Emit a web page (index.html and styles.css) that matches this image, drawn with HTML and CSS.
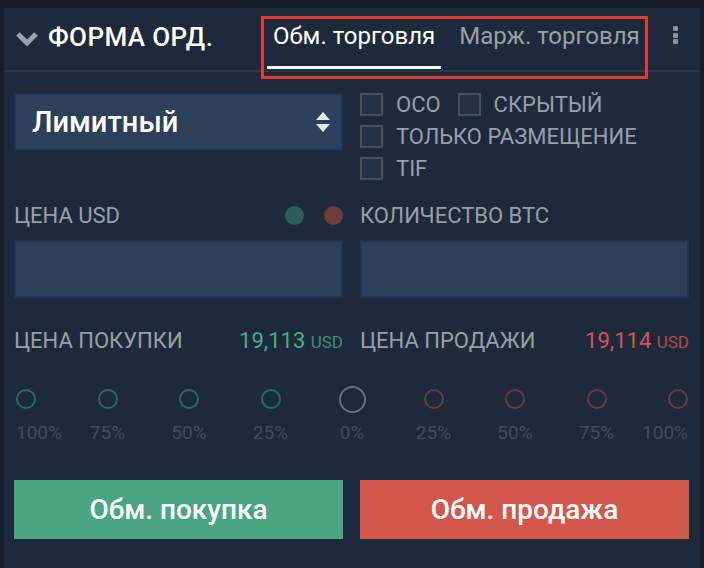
FILE: index.html
```html
<!DOCTYPE html>
<html lang="ru">
<head>
  <meta charset="UTF-8" />
  <meta name="viewport" content="width=device-width, initial-scale=1.0"/>
  <title>Форма ордера</title>
  <link rel="stylesheet" href="styles.css">
</head>
<body>
  <div class="order-panel">
    <div class="panel-header">
      <div class="panel-title">
        <svg class="chevron" width="24" height="16" viewBox="0 0 24 16">
          <polyline points="3,3 12,12 21,3" fill="none" stroke="#9aa2aa" stroke-width="5" stroke-linejoin="miter"/>
        </svg>
        <span>ФОРМА ОРД.</span>
      </div>

      <div class="tabs">
        <div class="tab active">Обм. торговля</div>
        <div class="tab">Марж. торговля</div>
        <div class="tabs-mark"></div>
      </div>

      <div class="kebab">
        <span></span><span></span><span></span>
      </div>
    </div>

    <div class="panel-body">
      <div class="form-grid">
        <div class="order-type">
          <span>Лимитный</span>
          <svg width="16" height="22" viewBox="0 0 16 22">
            <polygon points="8,1 15,9 1,9" fill="#e6eaee"/>
            <polygon points="1,13 15,13 8,21" fill="#e6eaee"/>
          </svg>
        </div>

        <div class="options">
          <div class="option-row">
            <label class="check"><span class="box"></span>OCO</label>
            <label class="check"><span class="box"></span>СКРЫТЫЙ</label>
          </div>
          <div class="option-row">
            <label class="check"><span class="box"></span>ТОЛЬКО РАЗМЕЩЕНИЕ</label>
          </div>
          <div class="option-row">
            <label class="check"><span class="box"></span>TIF</label>
          </div>
        </div>

        <div class="field">
          <div class="field-label">
            <span>ЦЕНА USD</span>
            <div class="dots">
              <span class="dot green"></span>
              <span class="dot red"></span>
            </div>
          </div>
          <div class="field-input"></div>
        </div>

        <div class="field">
          <div class="field-label">
            <span>КОЛИЧЕСТВО BTC</span>
          </div>
          <div class="field-input"></div>
        </div>

        <div class="price-line">
          <span>ЦЕНА ПОКУПКИ</span>
          <span class="price buy">19,113 <small>USD</small></span>
        </div>

        <div class="price-line">
          <span>ЦЕНА ПРОДАЖИ</span>
          <span class="price sell">19,114 <small>USD</small></span>
        </div>
      </div>

      <div class="stops">
        <div class="stop buy first"><i></i><span>100%</span></div>
        <div class="stop buy"><i></i><span>75%</span></div>
        <div class="stop buy"><i></i><span>50%</span></div>
        <div class="stop buy"><i></i><span>25%</span></div>
        <div class="stop zero"><i></i><span>0%</span></div>
        <div class="stop sell"><i></i><span>25%</span></div>
        <div class="stop sell"><i></i><span>50%</span></div>
        <div class="stop sell"><i></i><span>75%</span></div>
        <div class="stop sell last"><i></i><span>100%</span></div>
      </div>

      <div class="actions">
        <button class="action-btn buy">Обм. покупка</button>
        <button class="action-btn sell">Обм. продажа</button>
      </div>
    </div>
  </div>
</body>
</html>
```

FILE: styles.css
```css
body {
  margin: 0;
  padding: 8px 4px 0 4px;
  background: #151e28;
  font-family: Roboto, 'Noto Sans', sans-serif;
  height: 568px;
  box-sizing: border-box;
  overflow: hidden;
}

.order-panel {
  background: #1c2a3b;
  height: 560px;
}

/* Header */
.panel-header {
  display: flex;
  height: 62px;
  border-bottom: 2px solid #2b3845;
  position: relative;
}

.panel-title {
  display: flex;
  align-items: center;
  box-sizing: border-box;
  width: 257px;
  flex-shrink: 0;
  padding: 0 0 5px 11px;
  color: #ffffff;
  font-size: 26px;
  font-weight: 500;
  letter-spacing: 0.4px;
}

.chevron {
  margin-right: 9px;
  margin-top: 4px;
}

.tabs {
  display: flex;
  position: relative;
  padding-left: 6px;
}

.tab {
  display: flex;
  align-items: center;
  height: 58px;
  padding: 0 6px 3px;
  box-sizing: border-box;
  height: 61px;
  margin-right: 12px;
  border-bottom: 3px solid transparent;
  color: #9a9fa5;
  font-size: 24px;
  white-space: nowrap;
}

.tab.active {
  color: #ffffff;
  border-bottom-color: #ffffff;
}

/* red outline around the tab switcher */
.tabs-mark {
  position: absolute;
  left: 0;
  top: 8px;
  width: 381px;
  height: 57px;
  border: 3px solid #e33b2e;
}

.kebab {
  display: flex;
  flex-direction: column;
  gap: 1.5px;
  margin-left: auto;
  margin-right: 22px;
  margin-top: 18px;
}

.kebab span {
  width: 5px;
  height: 5px;
  border-radius: 1px;
  background: #8a9199;
}

/* Body */
.panel-body {
  padding: 21px 11px 0 10px;
}

.form-grid {
  display: grid;
  grid-template-columns: 1fr 1fr;
  column-gap: 17px;
}

.order-type {
  display: flex;
  align-items: center;
  justify-content: space-between;
  height: 58px;
  box-sizing: border-box;
  background: #2c4159;
  border: 2px solid #1d3550;
  padding: 0 10px 0 16px;
  color: #ffffff;
  font-size: 29px;
  font-weight: 500;
}

.options {
  display: flex;
  flex-direction: column;
  gap: 9px;
  padding-bottom: 22px;
}

.option-row {
  display: flex;
  gap: 17px;
}

.check {
  display: flex;
  align-items: center;
  gap: 13px;
  height: 23px;
  color: #9a9fa5;
  font-size: 22px;
  white-space: nowrap;
}

.check .box {
  width: 23px;
  height: 23px;
  box-sizing: border-box;
  border: 2px solid #4b5056;
  background: #233143;
}

.field-label {
  display: flex;
  align-items: center;
  justify-content: space-between;
  height: 26px;
  color: #9a9fa5;
  font-size: 22px;
  margin-bottom: 12px;
}

.dots {
  display: flex;
  gap: 20px;
}

.dot {
  width: 19px;
  height: 19px;
  border-radius: 50%;
}

.dot.green {
  background: #2b5e54;
}

.dot.red {
  background: #6d3d40;
}

.field-input {
  height: 58px;
  box-sizing: border-box;
  background: #2c4159;
  border: 2px solid #1d3550;
}

.price-line {
  display: flex;
  align-items: center;
  justify-content: space-between;
  height: 26px;
  margin-top: 29px;
  color: #9a9fa5;
  font-size: 22px;
}

.price {
  font-size: 22px;
}

.price small {
  font-size: 17px;
}

.price.buy {
  color: #4caa88;
}

.price.buy small {
  color: #3f8f75;
}

.price.sell {
  color: #d9534f;
}

.price.sell small {
  color: #b54a47;
}

/* Percent slider */
.stops {
  display: flex;
  justify-content: space-between;
  padding: 0 1px 0 2px;
  margin-top: 32px;
}

.stop {
  width: 20px;
  display: flex;
  flex-direction: column;
  align-items: center;
  white-space: nowrap;
}

.stop.first {
  align-items: flex-start;
}

.stop.last {
  align-items: flex-end;
}

.stop i {
  display: flex;
  align-items: center;
  justify-content: center;
  height: 28px;
}

.stop i::before {
  content: '';
  width: 20px;
  height: 20px;
  box-sizing: border-box;
  border-radius: 50%;
  border: 2px solid #2c6a5c;
}

.stop.sell i::before {
  border-color: #6c393d;
}

.stop.zero i::before {
  width: 27px;
  height: 27px;
  border-color: #68717b;
}

.stop span {
  margin-top: 9px;
  color: #414d5a;
  font-size: 19px;
  line-height: 22px;
}

/* Buttons */
.actions {
  display: grid;
  grid-template-columns: 1fr 1fr;
  column-gap: 17px;
  margin-top: 36px;
}

.action-btn {
  height: 59px;
  border: none;
  color: #ffffff;
  font-family: Roboto, 'Noto Sans', sans-serif;
  font-size: 28px;
  font-weight: 500;
  cursor: pointer;
}

.action-btn.buy {
  background: #4aa582;
}

.action-btn.sell {
  background: #d4574c;
}
```
